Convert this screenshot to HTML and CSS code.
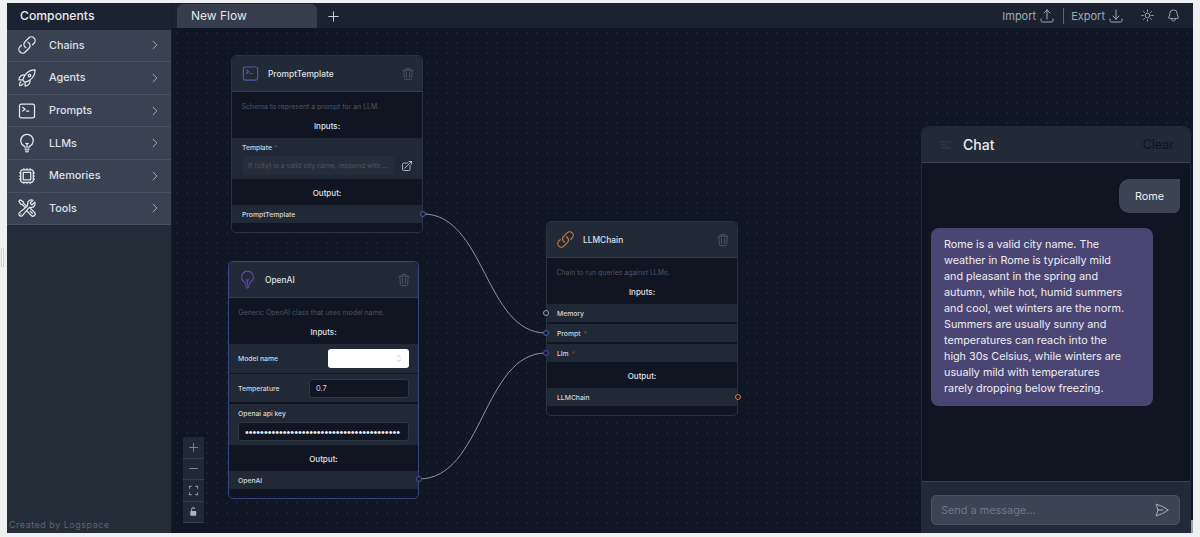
FILE: index.html
```html
<!DOCTYPE html>
<html lang="en">
<head>
    <meta charset="UTF-8">
    <meta name="viewport" content="width=device-width, initial-scale=1.0">
    <title>New Flow</title>
    <link rel="stylesheet" href="styles.css">
</head>
<body>
    <!-- icon sprite -->
    <svg class="sprite" xmlns="http://www.w3.org/2000/svg">
        <symbol id="i-link" viewBox="0 0 24 24"><path d="M13.19 8.688a4.5 4.5 0 011.242 7.244l-4.5 4.5a4.5 4.5 0 01-6.364-6.364l1.757-1.757m13.35-.622l1.757-1.757a4.5 4.5 0 00-6.364-6.364l-4.5 4.5a4.5 4.5 0 001.242 7.244"/></symbol>
        <symbol id="i-rocket" viewBox="0 0 24 24"><path d="M15.59 14.37a6 6 0 01-5.84 7.38v-4.8m5.84-2.58a14.98 14.98 0 006.16-12.12A14.98 14.98 0 009.631 8.41m5.96 5.96a14.926 14.926 0 01-5.841 2.58m-.119-8.54a6 6 0 00-7.381 5.84h4.8m2.581-5.84a14.927 14.927 0 00-2.58 5.84m2.699 2.7c-.103.021-.207.041-.311.06a15.09 15.09 0 01-2.448-2.448 14.9 14.9 0 01.06-.312m-2.24 2.39a4.493 4.493 0 00-1.757 4.306 4.493 4.493 0 004.306-1.758M16.5 9a1.5 1.5 0 11-3 0 1.5 1.5 0 013 0z"/></symbol>
        <symbol id="i-terminal" viewBox="0 0 24 24"><path d="M6.75 7.5l3 2.25-3 2.25m4.5 0h3m-9 8.25h13.5A2.25 2.25 0 0021 18V6a2.25 2.25 0 00-2.25-2.25H5.25A2.25 2.25 0 003 6v12a2.25 2.25 0 002.25 2.25z"/></symbol>
        <symbol id="i-bulb" viewBox="0 0 24 24"><path d="M12 18v-5.25m0 0a6.01 6.01 0 001.5-.189m-1.5.189a6.01 6.01 0 01-1.5-.189m3.75 7.478a12.06 12.06 0 01-4.5 0m3.75 2.383a14.406 14.406 0 01-3 0M14.25 18v-.192c0-.983.658-1.823 1.508-2.316a7.5 7.5 0 10-7.517 0c.85.493 1.509 1.333 1.509 2.316V18"/></symbol>
        <symbol id="i-chip" viewBox="0 0 24 24"><path d="M8.25 3v1.5M4.5 8.25H3m18 0h-1.5M4.5 12H3m18 0h-1.5m-15 3.75H3m18 0h-1.5M8.25 19.5V21M12 3v1.5m0 15V21m3.75-18v1.5m0 15V21m-9-1.5h10.5a2.25 2.25 0 002.25-2.25V6.75a2.25 2.25 0 00-2.25-2.25H6.75A2.25 2.25 0 004.5 6.75v10.5a2.25 2.25 0 002.25 2.25zm.75-12h9v9h-9v-9z"/></symbol>
        <symbol id="i-tools" viewBox="0 0 24 24"><path d="M11.42 15.17L17.25 21A2.652 2.652 0 0021 17.25l-5.877-5.877M11.42 15.17l2.496-3.03c.317-.384.74-.626 1.208-.766M11.42 15.17l-4.655 5.653a2.548 2.548 0 11-3.586-3.586l6.837-5.63m5.108-.233c.55-.164 1.163-.188 1.743-.14a4.5 4.5 0 004.486-6.336l-3.276 3.277a3.004 3.004 0 01-2.25-2.25l3.276-3.276a4.5 4.5 0 00-6.336 4.486c.091 1.076-.071 2.264-.904 2.95l-.102.085m-1.745 1.437L5.909 7.5H4.5L2.25 3.75l1.5-1.5L7.5 4.5v1.409l4.26 4.26m-1.745 1.437l1.745-1.437m6.615 8.206L15.75 15.75M4.867 19.125h.008v.008h-.008v-.008z"/></symbol>
        <symbol id="i-chevron" viewBox="0 0 24 24"><path d="M8.25 4.5l7.5 7.5-7.5 7.5"/></symbol>
        <symbol id="i-trash" viewBox="0 0 24 24"><path d="M14.74 9l-.346 9m-4.788 0L9.26 9m9.968-3.21c.342.052.682.107 1.022.166m-1.022-.165L18.16 19.673a2.25 2.25 0 01-2.244 2.077H8.084a2.25 2.25 0 01-2.244-2.077L4.772 5.79m14.456 0a48.108 48.108 0 00-3.478-.397m-12 .562c.34-.059.68-.114 1.022-.165m0 0a48.11 48.11 0 013.478-.397m7.5 0v-.916c0-1.18-.91-2.164-2.09-2.201a51.964 51.964 0 00-3.32 0c-1.18.037-2.09 1.022-2.09 2.201v.916m7.5 0a48.667 48.667 0 00-7.5 0"/></symbol>
        <symbol id="i-external" viewBox="0 0 24 24"><path d="M13.5 6H5.25A2.25 2.25 0 003 8.25v10.5A2.25 2.25 0 005.25 21h10.5A2.25 2.25 0 0018 18.75V10.5m-10.5 6L21 3m0 0h-5.25M21 3v5.25"/></symbol>
        <symbol id="i-upload" viewBox="0 0 24 24"><path d="M3 16.5v2.25A2.25 2.25 0 005.25 21h13.5A2.25 2.25 0 0021 18.75V16.5m-13.5-9L12 3m0 0l4.5 4.5M12 3v13.5"/></symbol>
        <symbol id="i-download" viewBox="0 0 24 24"><path d="M3 16.5v2.25A2.25 2.25 0 005.25 21h13.5A2.25 2.25 0 0021 18.75V16.5M16.5 12L12 16.5m0 0L7.5 12m4.5 4.5V3"/></symbol>
        <symbol id="i-sun" viewBox="0 0 24 24"><path d="M12 3v2.25m6.364.386l-1.591 1.591M21 12h-2.25m-.386 6.364l-1.591-1.591M12 18.75V21m-4.773-4.227l-1.591 1.591M5.25 12H3m4.227-4.773L5.636 5.636M15.75 12a3.75 3.75 0 11-7.5 0 3.75 3.75 0 017.5 0z"/></symbol>
        <symbol id="i-bell" viewBox="0 0 24 24"><path d="M14.857 17.082a23.848 23.848 0 005.454-1.31A8.967 8.967 0 0118 9.75v-.7V9A6 6 0 006 9v.75a8.967 8.967 0 01-2.312 6.022c1.733.64 3.56 1.085 5.455 1.31m5.714 0a24.255 24.255 0 01-5.714 0m5.714 0a3 3 0 11-5.714 0"/></symbol>
        <symbol id="i-send" viewBox="0 0 24 24"><path d="M6 12L3.269 3.126A59.768 59.768 0 0121.485 12 59.77 59.77 0 013.27 20.876L5.999 12zm0 0h7.5"/></symbol>
        <symbol id="i-bars" viewBox="0 0 24 24"><path d="M3.75 6.75h16.5M3.75 12H12m-8.25 5.25h16.5"/></symbol>
        <symbol id="i-plus" viewBox="0 0 24 24"><path d="M12 4.5v15m7.5-7.5h-15"/></symbol>
        <symbol id="i-minus" viewBox="0 0 24 24"><path d="M19.5 12h-15"/></symbol>
    </svg>

    <span class="resize-handle"></span>

    <div class="app">
        <aside class="sidebar">
            <div class="sidebar-title">Components</div>
            <div class="sidebar-item"><svg class="icon side-icon"><use href="#i-link"/></svg><span>Chains</span><svg class="icon chevron"><use href="#i-chevron"/></svg></div>
            <div class="sidebar-item"><svg class="icon side-icon"><use href="#i-rocket"/></svg><span>Agents</span><svg class="icon chevron"><use href="#i-chevron"/></svg></div>
            <div class="sidebar-item"><svg class="icon side-icon"><use href="#i-terminal"/></svg><span>Prompts</span><svg class="icon chevron"><use href="#i-chevron"/></svg></div>
            <div class="sidebar-item"><svg class="icon side-icon"><use href="#i-bulb"/></svg><span>LLMs</span><svg class="icon chevron"><use href="#i-chevron"/></svg></div>
            <div class="sidebar-item"><svg class="icon side-icon"><use href="#i-chip"/></svg><span>Memories</span><svg class="icon chevron"><use href="#i-chevron"/></svg></div>
            <div class="sidebar-item"><svg class="icon side-icon"><use href="#i-tools"/></svg><span>Tools</span><svg class="icon chevron"><use href="#i-chevron"/></svg></div>
            <div class="credit">Created by Logspace</div>
        </aside>

        <main class="main">
            <header class="topbar">
                <div class="tab">New Flow</div>
                <svg class="icon add-tab"><use href="#i-plus"/></svg>
                <div class="actions">
                    <span class="action">Import <svg class="icon"><use href="#i-upload"/></svg></span>
                    <span class="divider"></span>
                    <span class="action">Export <svg class="icon"><use href="#i-download"/></svg></span>
                    <svg class="icon theme"><use href="#i-sun"/></svg>
                    <svg class="icon bell"><use href="#i-bell"/></svg>
                </div>
            </header>

            <section class="canvas">
                <svg class="edges" width="1021" height="505" viewBox="172 28 1021 505">
                    <path d="M423 214C485 214 485 333 546 333"/>
                    <path d="M419 479C483 479 483 353 546 353"/>
                </svg>

                <!-- PromptTemplate -->
                <div class="node node-prompt">
                    <div class="node-head">
                        <svg class="icon node-icon blue"><use href="#i-terminal"/></svg>
                        <span class="node-name">PromptTemplate</span>
                        <svg class="icon trash"><use href="#i-trash"/></svg>
                    </div>
                    <p class="node-desc">Schema to represent a prompt for an LLM.</p>
                    <div class="node-label">Inputs:</div>
                    <div class="row row-stack">
                        <span>Template <i class="req">*</i></span>
                        <div class="template-field">
                            <div class="template-input">If {city} is a valid city name, respond with ...</div>
                            <svg class="icon external"><use href="#i-external"/></svg>
                        </div>
                    </div>
                    <div class="node-label label-out">Output:</div>
                    <div class="row">PromptTemplate</div>
                    <span class="handle out blue-h handle-prompt-out"></span>
                </div>

                <!-- OpenAI -->
                <div class="node node-openai">
                    <div class="node-head">
                        <svg class="icon node-icon purple"><use href="#i-bulb"/></svg>
                        <span class="node-name">OpenAI</span>
                        <svg class="icon trash"><use href="#i-trash"/></svg>
                    </div>
                    <p class="node-desc">Generic OpenAI class that uses model name.</p>
                    <div class="node-label">Inputs:</div>
                    <div class="row row-field">
                        <span>Model name</span>
                        <div class="select">
                            <svg class="select-arrows" viewBox="0 0 8 12"><path d="M1.5 4.5L4 2l2.5 2.5M1.5 7.5L4 10l2.5-2.5"/></svg>
                        </div>
                    </div>
                    <div class="row row-field row-temp">
                        <span>Temperature</span>
                        <div class="text-input temp-input">0.7</div>
                    </div>
                    <div class="row row-stack row-key">
                        <span>Openai api key</span>
                        <div class="text-input key-input">•••••••••••••••••••••••••••••••••••••••••</div>
                    </div>
                    <div class="node-label label-out">Output:</div>
                    <div class="row">OpenAI</div>
                    <span class="handle out purple-h handle-openai-out"></span>
                </div>

                <!-- LLMChain -->
                <div class="node node-chain">
                    <div class="node-head">
                        <svg class="icon node-icon orange"><use href="#i-link"/></svg>
                        <span class="node-name">LLMChain</span>
                        <svg class="icon trash"><use href="#i-trash"/></svg>
                    </div>
                    <p class="node-desc">Chain to run queries against LLMs.</p>
                    <div class="node-label">Inputs:</div>
                    <div class="row">Memory</div>
                    <div class="row row-next">Prompt <i class="req">*</i></div>
                    <div class="row row-next">Llm <i class="req">*</i></div>
                    <div class="node-label label-out">Output:</div>
                    <div class="row">LLMChain</div>
                    <span class="handle in grey-h handle-memory"></span>
                    <span class="handle in blue-h handle-promptin"></span>
                    <span class="handle in purple-h handle-llm"></span>
                    <span class="handle out orange-h handle-chain-out"></span>
                </div>

                <div class="zoom-controls">
                    <div class="zoom-btn"><svg class="icon"><use href="#i-plus"/></svg></div>
                    <div class="zoom-btn"><svg class="icon"><use href="#i-minus"/></svg></div>
                    <div class="zoom-btn"><svg class="icon fit" viewBox="0 0 24 24"><path d="M3 8V3h5M16 3h5v5M21 16v5h-5M8 21H3v-5"/></svg></div>
                    <div class="zoom-btn"><svg class="icon lock" viewBox="0 0 24 24"><path class="lock-shackle" d="M8 11V7a3.5 3.5 0 016.5-1.5"/><rect class="lock-body" x="5" y="11" width="13" height="10" rx="1.5"/></svg></div>
                </div>

                <!-- chat panel -->
                <div class="chat">
                    <div class="chat-head">
                        <svg class="icon chat-bars"><use href="#i-bars"/></svg>
                        <span class="chat-title">Chat</span>
                        <span class="chat-clear">Clear</span>
                    </div>
                    <div class="chat-body">
                        <div class="bubble user">Rome</div>
                        <div class="bubble bot">Rome is a valid city name. The weather in Rome is typically mild and pleasant in the spring and autumn, while hot, humid summers and cool, wet winters are the norm. Summers are usually sunny and temperatures can reach into the high 30s Celsius, while winters are usually mild with temperatures rarely dropping below freezing.</div>
                    </div>
                    <div class="chat-foot">
                        <div class="chat-input">
                            <span>Send a message...</span>
                            <svg class="icon send"><use href="#i-send"/></svg>
                        </div>
                    </div>
                </div>
                <span class="scroll-thumb"></span>
            </section>
        </main>
    </div>
</body>
</html>
```

FILE: styles.css
```css
* {
    box-sizing: border-box;
}

body {
    margin: 0;
    height: 100vh;
    overflow: hidden;
    position: relative;
    padding: 3px 7px 4px 7px;
    font-family: 'Inter', sans-serif;
    background-color: #eff0f2;
}

.sprite {
    display: none;
}

.resize-handle {
    position: absolute;
    left: 1px;
    top: 248px;
    width: 3px;
    height: 19px;
    background-color: #fff;
    border: 1px solid #c9ccd1;
    border-radius: 1px;
}

.icon {
    fill: none;
    stroke: currentColor;
    stroke-width: 1.5;
    stroke-linecap: round;
    stroke-linejoin: round;
    flex-shrink: 0;
}

.app {
    display: flex;
    height: 100%;
    background-color: #111624;
}

/* Sidebar */
.sidebar {
    width: 165px;
    display: flex;
    flex-direction: column;
    background-color: #242c38;
    border-right: 1px solid #171c27;
    flex-shrink: 0;
}

.sidebar-title {
    height: 26.6px;
    padding: 0 0 2px 13px;
    display: flex;
    align-items: center;
    font-size: 12.2px;
    font-weight: 500;
    color: #e8eaee;
    background-color: #1c2330;
}

.sidebar-item {
    height: 32.6px;
    flex-shrink: 0;
    display: flex;
    align-items: center;
    padding-left: 10px;
    font-size: 10.8px;
    font-weight: 500;
    color: #dde0e6;
    background-color: #3a4252;
    border-bottom: 1px solid #485061;
}

.sidebar-item:last-of-type {
    border-bottom: none;
}

.side-icon {
    width: 20px;
    height: 20px;
    margin-right: 12px;
    color: #e4e6ea;
}

.chevron {
    width: 12px;
    height: 12px;
    margin-left: auto;
    margin-right: 10px;
    color: #c3c7cf;
}

.credit {
    margin-top: auto;
    padding: 0 0 3px 2px;
    font-size: 9px;
    letter-spacing: 0.5px;
    color: #5c6473;
}

/* Top bar */
.main {
    flex: 1;
    display: flex;
    flex-direction: column;
    min-width: 0;
}

.topbar {
    height: 25px;
    display: flex;
    align-items: flex-end;
    padding-left: 5px;
    background-color: #1c2330;
    color: #a3a8b2;
    flex-shrink: 0;
}

.tab {
    width: 140px;
    height: 24px;
    padding: 0 0 1px 14px;
    display: flex;
    align-items: center;
    font-size: 12px;
    color: #e3e5e9;
    background-color: #363e4e;
    border-radius: 6px 6px 0 0;
}

.add-tab {
    width: 15px;
    height: 15px;
    margin: 0 0 4px 9px;
    color: #d8dbe0;
}

.actions {
    margin-left: auto;
    height: 100%;
    display: flex;
    align-items: center;
    padding-right: 12px;
    font-size: 11px;
}

.action {
    display: flex;
    align-items: center;
    gap: 3px;
}

.action .icon {
    width: 16px;
    height: 16px;
}

.divider {
    width: 1px;
    height: 16px;
    margin: 0 7px 0 8px;
    background-color: #5c6373;
}

.theme {
    width: 15px;
    height: 15px;
    margin-left: 16px;
}

.bell {
    width: 15px;
    height: 15px;
    margin-left: 11px;
}

/* Canvas */
.canvas {
    flex: 1;
    position: relative;
    overflow: hidden;
    background-color: #111624;
    background-image: radial-gradient(#272d3b 0.6px, transparent 0.8px);
    background-size: 10px 10px;
}

.edges {
    position: absolute;
    left: 0;
    top: 0;
}

.edges path {
    fill: none;
    stroke: #8e94a0;
    stroke-width: 1;
}

/* Nodes */
.node {
    position: absolute;
    width: 192px;
    border: 1px solid #2a3240;
    border-radius: 5px;
    background-color: #111522;
    font-size: 6.8px;
    color: #d4d7dd;
    padding-bottom: 9px;
}

.node-prompt {
    left: 59px;
    top: 27px;
}

.node-openai {
    left: 56px;
    top: 233px;
    width: 191px;
    border-color: #34457f;
}

.node-openai .row {
    padding-left: 9px;
    padding-right: 9px;
}

.node-chain {
    left: 374px;
    top: 193px;
}

.node-head {
    height: 36px;
    display: flex;
    align-items: center;
    padding: 0 7px 0 9px;
    background-color: #232a37;
    border-bottom: 1px solid #353c4a;
    border-radius: 5px 5px 0 0;
}

.node-icon {
    width: 19px;
    height: 19px;
}

.blue {
    color: #3f5fa8;
}

.purple {
    color: #5a49b0;
}

.orange {
    color: #c87a3e;
}

.node-name {
    margin-left: 8px;
    font-size: 8.4px;
    font-weight: 500;
    color: #dfe1e6;
}

.trash {
    width: 14px;
    height: 14px;
    margin-left: auto;
    color: #4f5665;
}

.node-desc {
    margin: 0;
    padding: 10px 9.5px 0;
    height: 22px;
    font-size: 6.9px;
    line-height: 9px;
    color: #4e5460;
}

.node-label {
    height: 24px;
    display: flex;
    align-items: center;
    justify-content: center;
    font-size: 8px;
    font-weight: 500;
    color: #dfe1e6;
}

.label-out {
    height: 26px;
    padding-top: 1px;
}

.row {
    height: 18px;
    display: flex;
    align-items: center;
    gap: 3px;
    padding: 0 10px;
    background-color: #222936;
    font-weight: 500;
}

.row-next {
    margin-top: 2px;
}

.row-stack {
    height: 41px;
    flex-direction: column;
    align-items: stretch;
    gap: 4px;
    padding-top: 5px;
}

.row-field {
    height: 29px;
    justify-content: space-between;
}

.row-temp {
    height: 28px;
    margin-top: 1px;
}

.row-key {
    margin-top: 2px;
}

.req {
    font-style: normal;
    color: #8a3a45;
}

.template-field {
    display: flex;
    align-items: center;
}

.template-input {
    width: 152px;
    height: 19px;
    padding: 0 6px;
    display: flex;
    align-items: center;
    background-color: #272e3b;
    border-radius: 3px;
    font-weight: 400;
    font-size: 6.8px;
    color: #4e5564;
    white-space: nowrap;
}

.external {
    width: 12px;
    height: 12px;
    margin-left: 7px;
    color: #d4d7dd;
}

.select {
    width: 81px;
    height: 19px;
    display: flex;
    align-items: center;
    justify-content: flex-end;
    padding-right: 7px;
    background-color: #fff;
    border-radius: 3px;
}

.select-arrows {
    width: 6px;
    height: 9px;
    fill: none;
    stroke: #a7abb3;
    stroke-width: 0.9;
}

.text-input {
    height: 19px;
    display: flex;
    align-items: center;
    padding: 0 6px;
    background-color: #111522;
    border: 1px solid #2f3644;
    border-radius: 3px;
    color: #d8dbe0;
    font-weight: 400;
    white-space: nowrap;
}

.temp-input {
    width: 100px;
    font-size: 7.5px;
}

.key-input {
    font-family: 'Liberation Sans', sans-serif;
    font-size: 10.8px;
    color: #e6e8ec;
}

/* Handles */
.handle {
    position: absolute;
    width: 6px;
    height: 6px;
    border-radius: 50%;
    background-color: #171c2a;
    border: 1px solid #888;
}

.out {
    right: -4px;
}

.in {
    left: -4px;
}

.grey-h {
    border-color: #9aa0ab;
}

.blue-h {
    border-color: #4a5cb4;
}

.purple-h {
    border-color: #5a46b0;
}

.orange-h {
    border-color: #d07f3d;
}

.handle-prompt-out {
    top: 155px;
}

.handle-openai-out {
    top: 214px;
}

.handle-memory {
    top: 88px;
}

.handle-promptin {
    top: 108px;
}

.handle-llm {
    top: 128px;
}

.handle-chain-out {
    top: 172px;
}

/* Zoom controls */
.zoom-controls {
    position: absolute;
    left: 11px;
    bottom: 10px;
    width: 21px;
    display: flex;
    flex-direction: column;
    color: #8d93a0;
}

.zoom-btn {
    height: 21.5px;
    display: flex;
    align-items: center;
    justify-content: center;
    background-color: #222936;
    border-bottom: 1px solid #353c4a;
}

.zoom-btn .icon {
    width: 13px;
    height: 13px;
}

.zoom-btn .fit {
    width: 11px;
    height: 11px;
    stroke-width: 2.2;
    stroke-linecap: butt;
}

.zoom-btn .lock {
    width: 11px;
    height: 11px;
    stroke-width: 2.2;
}

.lock-body {
    fill: #aeb2bb;
    stroke: none;
}

.lock-shackle {
    stroke: #aeb2bb;
}

/* Chat */
.chat {
    position: absolute;
    top: 98px;
    bottom: 0;
    left: 749px;
    width: 270px;
    display: flex;
    flex-direction: column;
    background-color: #111522;
    border-radius: 8px 8px 0 0;
    border: 1px solid #232a37;
    border-bottom: none;
}

.chat-head {
    height: 36px;
    display: flex;
    align-items: center;
    padding: 0 16px 0 17px;
    background-color: #232a37;
    border-bottom: 1px solid #3a4150;
    border-radius: 8px 8px 0 0;
}

.chat-bars {
    width: 14px;
    height: 14px;
    color: #3e3a66;
}

.chat-title {
    margin-left: 10px;
    font-size: 14px;
    font-weight: 500;
    color: #e8eaee;
}

.chat-clear {
    margin-left: auto;
    font-size: 12.5px;
    color: #0d111b;
}

.chat-body {
    flex: 1;
    display: flex;
    flex-direction: column;
    padding: 16px 10px 0 9px;
}

.bubble {
    font-size: 10.8px;
    color: #eceef1;
}

.user {
    align-self: flex-end;
    width: 61px;
    height: 34px;
    display: flex;
    align-items: center;
    justify-content: center;
    background-color: #3c4353;
    border-radius: 10px 0 6px 10px;
}

.bot {
    width: 222px;
    margin-top: 15px;
    padding: 9px 24px 9px 13px;
    line-height: 16px;
    background-color: #4b4573;
    border-radius: 8px;
}

.chat-foot {
    height: 52px;
    padding: 13px 10px 0 9px;
    background-color: #232a37;
    border-top: 1px solid #3a4150;
}

.chat-input {
    height: 30px;
    display: flex;
    align-items: center;
    padding: 0 9px;
    font-size: 10.9px;
    color: #727887;
    background-color: #3c4353;
    border: 1px solid #4a5161;
    border-radius: 5px;
}

.send {
    width: 16px;
    height: 16px;
    margin-left: auto;
    color: #a9adb7;
}

.scroll-thumb {
    position: absolute;
    right: 0;
    bottom: 0;
    width: 2px;
    height: 13px;
    background-color: #9a9ea5;
}
```
